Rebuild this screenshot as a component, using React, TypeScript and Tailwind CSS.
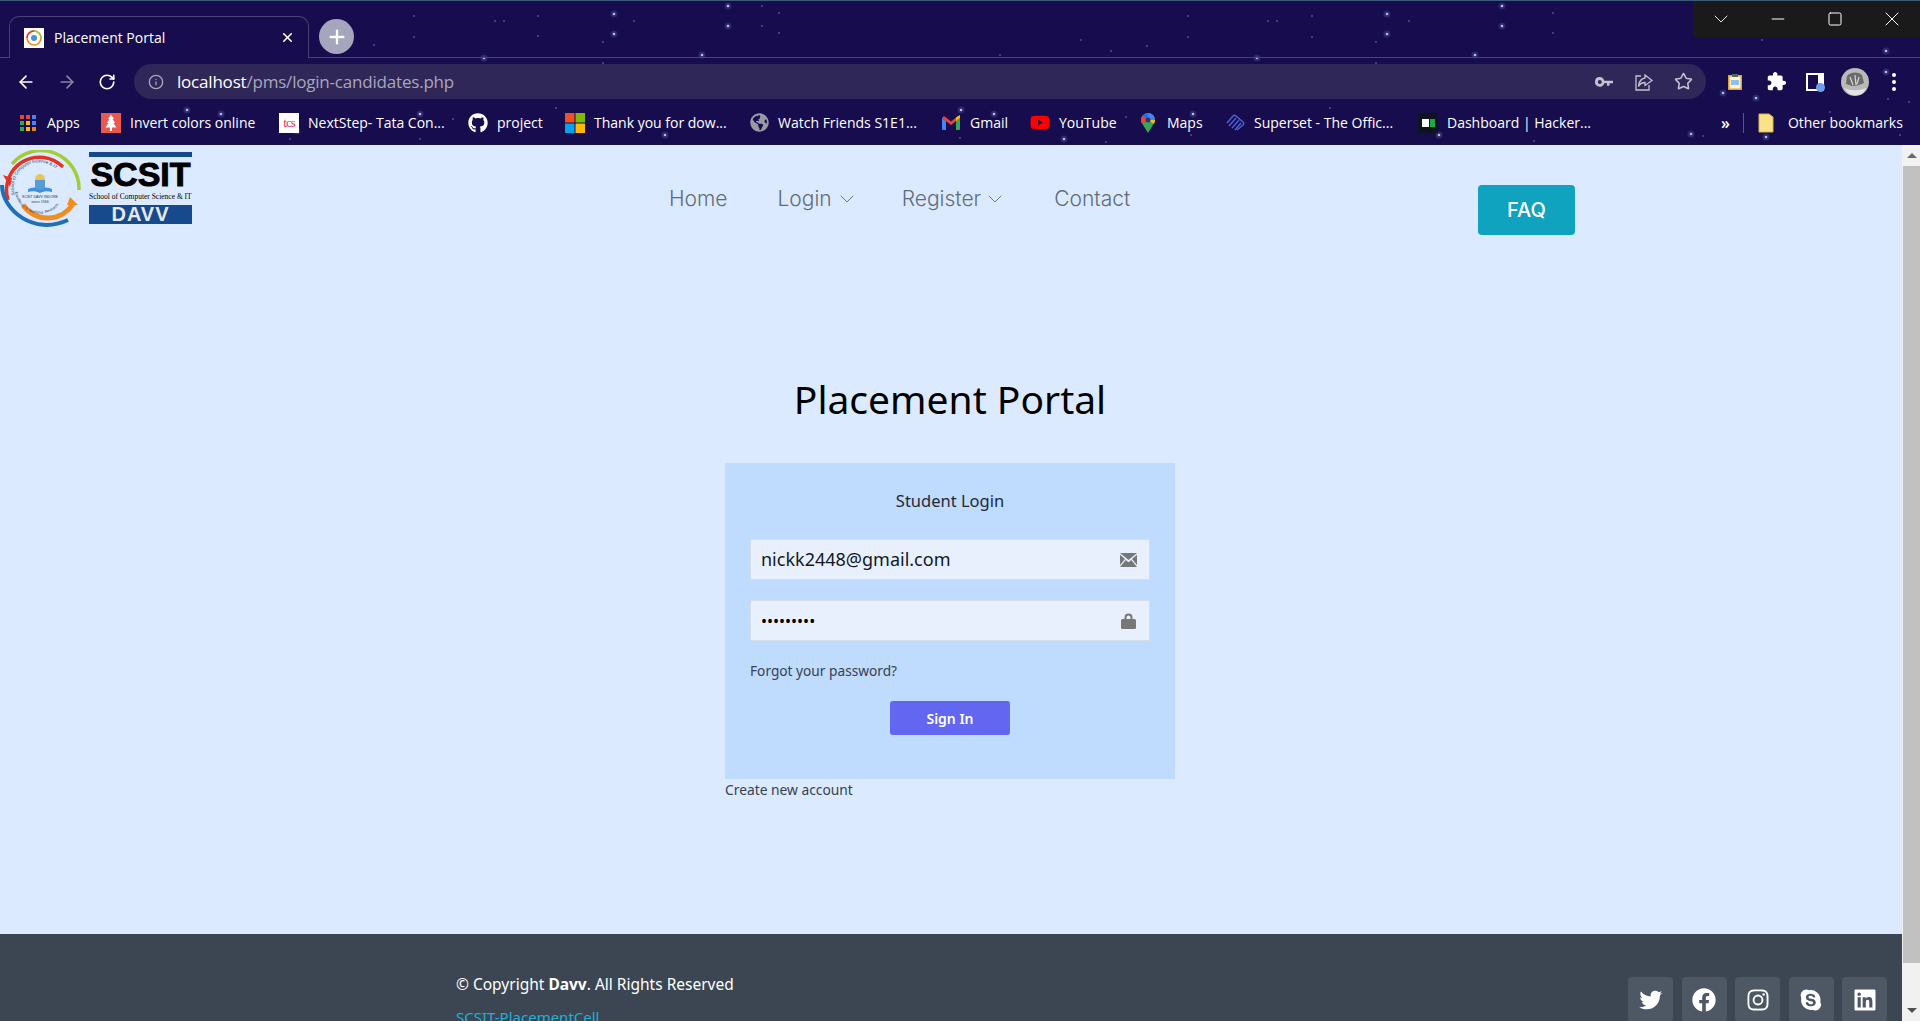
import { ArrowLeft, ArrowRight, ChevronDown, Info, Minus, Plus, RotateCw, Square, Star, X } from "lucide-react";
import { BiLogoFacebookCircle, BiLogoInstagram, BiLogoLinkedinSquare, BiLogoSkype, BiLogoTwitter } from "react-icons/bi";
import { FaGithub, FaGlobeAmericas, FaYoutube } from "react-icons/fa";

const chromeFont = "font-['Open_Sans','Noto_Sans',sans-serif]";
const pageFont = "font-['Noto_Sans',sans-serif]";

// bright stars of the chrome theme
const bigStars = [
  [614, 13], [614, 33], [484, 57], [187, 109], [221, 113], [420, 113], [728, 5], [728, 25], [702, 54], [961, 109], [994, 113], [1064, 138],
  [1193, 113], [1257, 57], [1387, 13], [1387, 33], [1475, 54], [1502, 5], [1502, 25], [1886, 50], [1886, 71], [1723, 92], [1756, 97],
  [1439, 134], [1691, 133], [1766, 136], [297, 130], [665, 134],
];
// faint ones
const smallStars = [
  [603, 41], [603, 62], [420, 138], [556, 107], [290, 138], [453, 118], [762, 5], [779, 12], [762, 25], [779, 32], [960, 137], [1126, 116],
  [1106, 141], [1191, 134], [1081, 39], [1111, 50], [1147, 45], [1188, 15], [1188, 36], [1268, 20], [1277, 20], [1312, 15], [1312, 36],
  [1000, 54], [1376, 41], [1376, 62], [1553, 12], [1553, 32], [1888, 98], [1460, 126], [1703, 135], [1830, 111], [1900, 134], [1762, 39],
  [1909, 101], [1534, 140], [1330, 107], [1409, 20], [495, 20], [504, 20], [538, 15], [538, 35], [414, 15], [414, 36], [634, 20], [374, 44],
];

function Apps() {
  const colors = ["#ea4335", "#ea4335", "#4285f4", "#34a853", "#fbbc04", "#4285f4", "#34a853", "#fbbc04", "#ea8600"];
  return (
    <div className="grid grid-cols-3 gap-[2px] w-[16px] h-[16px]">
      {colors.map((c, i) => (
        <span key={i} className="w-[4px] h-[4px]" style={{ backgroundColor: c }} />
      ))}
    </div>
  );
}

function Invert() {
  return (
    <svg width="20" height="20" viewBox="0 0 20 20">
      <rect width="20" height="20" fill="#e8594f" />
      <path d="M10 1.5 13 6h-1.5l2.5 4h-1.6l3 4.5H11V18H9v-3.500H4.500l3-4.500H6l2.500-4H7z" fill="#fff" />
    </svg>
  );
}

function Tcs() {
  return (
    <div className="w-[20px] h-[20px] bg-white flex items-center justify-center text-[#d6336c] font-['Liberation_Serif',serif] text-[13px] leading-none tracking-[-1px]">
      tcs
    </div>
  );
}

function Microsoft() {
  return (
    <svg width="20" height="20" viewBox="0 0 20 20">
      <rect width="9.500" height="9.500" fill="#f25022" />
      <rect x="10.500" width="9.500" height="9.500" fill="#7fba00" />
      <rect y="10.500" width="9.500" height="9.500" fill="#00a4ef" />
      <rect x="10.500" y="10.500" width="9.500" height="9.500" fill="#ffb900" />
    </svg>
  );
}

function Gmail() {
  return (
    <svg width="18" height="16" viewBox="0 0 18 16">
      <path d="M0 3v11a1 1 0 0 0 1 1h3V6z" fill="#4285f4" />
      <path d="M18 3v11a1 1 0 0 1-1 1h-3V6z" fill="#34a853" />
      <path d="M0 3 9 10l9-7-2-2-7 5.500L2 1z" fill="#ea4335" />
      <path d="M14 2.500 18 0v3l-4 3z" fill="#fbbc04" />
    </svg>
  );
}

function Maps() {
  return (
    <svg width="14" height="20" viewBox="0 0 14 20">
      <path d="M7 0a7 7 0 0 0-7 7c0 1.500.5 2.700 1.300 3.800L7 20l5.700-9.200C13.500 9.700 14 8.500 14 7a7 7 0 0 0-7-7z" fill="#34a853" />
      <path d="M7 0a7 7 0 0 0-5.400 2.500L7 7z" fill="#1a73e8" />
      <path d="M7 0a7 7 0 0 1 7 7H7z" fill="#4285f4" />
      <path d="M1.600 2.500A7 7 0 0 0 1.300 10.800L7 7z" fill="#ea4335" />
      <path d="M14 7c0 1.500-.5 2.700-1.300 3.800L7 7z" fill="#fbbc04" />
      <circle cx="7" cy="7" r="2.500" fill="#3b2c70" />
    </svg>
  );
}

function Superset() {
  return (
    <svg width="20" height="18" viewBox="0 0 20 18" fill="none" stroke="#4a5fd8" strokeWidth="1.500">
      <path d="M2 9 8 2c1-1 2-1 3 0l7 6c1 1 1 2 0 3l-6 5" />
      <path d="M4 12l7-8M7 14l7-8M10 16l6-7" />
    </svg>
  );
}

function Hacker() {
  return (
    <div className="w-[20px] h-[20px] bg-[#0e141e] flex items-center justify-center gap-[1px]">
      <span className="w-[7px] h-[8px] bg-white" />
      <span className="w-[5px] h-[8px] bg-[#1ba94c]" />
    </div>
  );
}

const bookmarks = [
  { w: "w-[83px]", icon: <Apps />, text: "Apps" },
  { w: "w-[178px]", icon: <Invert />, text: "Invert colors online" },
  { w: "w-[189px]", icon: <Tcs />, text: "NextStep- Tata Con..." },
  { w: "w-[97px]", icon: <FaGithub size={20} color="#fff" />, text: "project" },
  { w: "w-[184px]", icon: <Microsoft />, text: "Thank you for dow..." },
  { w: "w-[192px]", icon: <FaGlobeAmericas size={19} color="#9a9aa5" />, text: "Watch Friends S1E1..." },
  { w: "w-[89px]", icon: <Gmail />, text: "Gmail" },
  { w: "w-[108px]", icon: <FaYoutube size={21} color="#ff0000" />, text: "YouTube" },
  { w: "w-[87px]", icon: <Maps />, text: "Maps" },
  { w: "w-[193px]", icon: <Superset />, text: "Superset - The Offic..." },
  { w: "w-[303px]", icon: <Hacker />, text: "Dashboard | Hacker..." },
];

function BrowserChrome() {
  return (
    <div className={`relative h-[145px] shrink-0 bg-[#170d4e] border-t border-[#3d5a7a] overflow-hidden text-white ${chromeFont}`}>
      <svg className="absolute inset-0" width="1920" height="145">
        {bigStars.map(([x, y], i) => (
          <g key={i}>
            <circle cx={x} cy={y} r="3.500" fill="#6f7bc8" opacity="0.25" />
            <circle cx={x} cy={y} r="1.300" fill="#b4bde8" />
          </g>
        ))}
        {smallStars.map(([x, y], i) => (
          <circle key={i} cx={x} cy={y} r="0.700" fill="#8f97c8" />
        ))}
      </svg>

      {/* tab strip */}
      <div className="relative h-[57px] flex items-end border-b border-[#4a4270]">
        <div className="w-[300px] h-[42px] ml-[9px] -mb-px rounded-t-[10px] border border-b-0 border-[#4a4270] bg-[#170d4e] flex items-center pl-[14px] pr-[13px]">
          <svg width="20" height="20" viewBox="0 0 20 20" className="shrink-0 bg-white">
            <circle cx="10" cy="10" r="7" fill="none" stroke="#f08a24" strokeWidth="1.600" />
            <path d="M3 10a7 7 0 0 1 7-7" fill="none" stroke="#e53935" strokeWidth="1.600" />
            <path d="M10 3a7 7 0 0 1 7 7" fill="none" stroke="#9bc53d" strokeWidth="1.600" />
            <circle cx="10" cy="10" r="3" fill="#4a90d9" />
          </svg>
          <span className="ml-[10px] text-[14px] leading-none">Placement Portal</span>
          <X size={15} strokeWidth={2.500} className="ml-auto" />
        </div>
        <div className="ml-[10px] mb-[3px] w-[35px] h-[35px] rounded-full bg-[#a5a5bd] flex items-center justify-center">
          <Plus size={22} strokeWidth={2.500} />
        </div>
        <div className="absolute right-0 top-0 h-[36px] w-[227px] bg-[#1a1a1a] flex">
          <div className="w-[57px] flex items-center justify-center"><ChevronDown size={24} strokeWidth={0.900} /></div>
          <div className="w-[57px] flex items-center justify-center"><Minus size={20} strokeWidth={1.200} /></div>
          <div className="w-[57px] flex items-center justify-center"><Square size={16} strokeWidth={1.500} /></div>
          <div className="w-[57px] flex items-center justify-center"><X size={24} strokeWidth={1} /></div>
        </div>
      </div>

      {/* toolbar */}
      <div className="relative h-[42px] pt-[5px] flex items-center">
        <ArrowLeft size={20} className="ml-[16px]" />
        <ArrowRight size={20} className="ml-[21px] text-[#8a85a5]" />
        <RotateCw size={18} strokeWidth={2.200} className="ml-[21px]" />
        <div className="ml-[18px] w-[1572px] h-[35px] rounded-full bg-[#2f2757] flex items-center pl-[14px] pr-[13px]">
          <Info size={16} className="text-[#aaa6bd]" />
          <span className="ml-[13px] text-[17px] leading-none tracking-[-0.2px]">
            localhost<span className="text-[#aaa6bd]">/pms/login-candidates.php</span>
          </span>
          <svg width="18" height="10" viewBox="0 0 18 10" fill="#c4c1d3" className="ml-auto">
            <path d="M4.800 0a4.800 4.800 0 1 0 4.500 6.300H12v2.500h2.500V6.300H18V3.700H9.300A4.800 4.800 0 0 0 4.800 0zm0 3a2 2 0 1 1 0 4 2 2 0 0 1 0-4z" />
          </svg>
          <svg width="20" height="20" viewBox="0 0 20 20" fill="none" stroke="#c4c1d3" strokeWidth="1.300" className="ml-[21px]">
            <path d="M7 4H2v14h13v-5" />
            <path d="M11 3l7 5.500-7 5v-3c-3 0-5 1-6.500 4C5 9 8 6.500 11 6z" />
          </svg>
          <Star size={19} className="ml-[20px] text-[#c4c1d3]" />
        </div>
        <svg width="14" height="16" viewBox="0 0 14 16" className="ml-[22px]">
          <rect x="0.750" y="1.750" width="12.500" height="13.500" fill="#fdf3d8" stroke="#e0a030" strokeWidth="1.500" />
          <rect x="4" y="0" width="6" height="3" fill="#4b6a60" />
          <rect x="3" y="6" width="8" height="5" fill="#8fc0ea" />
        </svg>
        <svg width="21" height="21" viewBox="0 0 24 24" fill="#fff" className="ml-[24px]">
          <path d="M20.500 11H19V7c0-1.100-.9-2-2-2h-4V3.500C13 2.120 11.880 1 10.500 1S8 2.120 8 3.500V5H4c-1.100 0-1.990.9-1.990 2v3.800H3.500c1.490 0 2.700 1.210 2.700 2.700s-1.210 2.700-2.700 2.700H2V20c0 1.100.9 2 2 2h3.800v-1.500c0-1.490 1.210-2.700 2.700-2.700 1.490 0 2.700 1.210 2.700 2.700V22H17c1.100 0 2-.9 2-2v-4h1.500c1.380 0 2.500-1.120 2.500-2.500S21.880 11 20.500 11z" />
        </svg>
        <div className="relative ml-[19px] w-[18px] h-[18px] bg-white">
          <span className="absolute left-[2px] top-[2px] w-[10px] h-[14px] bg-[#170d4e]" />
          <span className="absolute -right-[1px] -bottom-[1px] w-[9px] h-[9px] rounded-full bg-[#6d9eeb]" />
        </div>
        <svg width="28" height="28" viewBox="0 0 28 28" className="ml-[17px]">
          <circle cx="14" cy="14" r="14" fill="#b9b9b9" />
          <path d="M6 8c3-4 11-5 15-1l2 8c-4 2-8 3-12 3l-6-2z" fill="#6b6b6b" />
          <path d="M9 9l3 8M14 7l1 10M18 9l-2 7" stroke="#d8d8d8" strokeWidth="1.200" />
          <path d="M3 20c6 3 15 3 22 0l-3 5c-5 3-11 3-15 0z" fill="#e4e4e4" />
        </svg>
        <div className="ml-[23px] flex flex-col gap-[3px]">
          <span className="w-[4px] h-[4px] rounded-full bg-white" />
          <span className="w-[4px] h-[4px] rounded-full bg-white" />
          <span className="w-[4px] h-[4px] rounded-full bg-white" />
        </div>
      </div>

      {/* bookmarks */}
      <div className="relative h-[45px] pl-[18px] flex items-center text-[14px]">
        {bookmarks.map((b) => (
          <div key={b.text} className={`${b.w} shrink-0 flex items-center`}>
            <div className="w-[20px] flex justify-center shrink-0">{b.icon}</div>
            <span className="ml-[9px] whitespace-nowrap">{b.text}</span>
          </div>
        ))}
        <span className="text-[16px] font-semibold">»</span>
        <span className="ml-[13px] w-px h-[20px] bg-[#5a5480]" />
        <svg width="16" height="20" viewBox="0 0 16 20" className="ml-[14px]">
          <path d="M1 1h10l4 3v15H1z" fill="#fbe28a" stroke="#d9b44a" />
        </svg>
        <span className="ml-[14px] whitespace-nowrap">Other bookmarks</span>
      </div>
    </div>
  );
}

function Logo() {
  return (
    <div className="flex items-start">
      <svg width="84" height="84" viewBox="0 0 84 84" fill="none" className="mt-[5px] shrink-0">
        <path d="M12 14A38 38 0 0 1 79 40" stroke="#a4cc39" strokeWidth="3.500" />
        <path d="M73 54A30 30 0 0 1 23 55" stroke="#f28c1f" strokeWidth="5" />
        <path d="M8 50A33 33 0 0 1 63 17" stroke="#e53226" strokeWidth="3.500" />
        <path d="M2 35C2 60 34 86 68 70" stroke="#1f6fb8" strokeWidth="4" />
        <path d="M3 25l9 3-2 9z" fill="#e53226" />
        <path d="M78 55 70 47l-3 8z" fill="#f28c1f" />
        <path id="seal-top" d="M15 45A25 25 0 0 1 63 30" />
        <path id="seal-bottom" d="M15 42A25 25 0 0 0 62 50" />
        <text fontSize="4.400" fill="#2b3a55" fontFamily="Liberation Sans">
          <textPath href="#seal-top">School of Computer Science &amp; IT</textPath>
        </text>
        <text fontSize="3.800" fill="#2b3a55" fontFamily="Liberation Sans">
          <textPath href="#seal-bottom">Excellence in Teaching, Research</textPath>
        </text>
        <path d="M28 39c4-2 8-2 12 0 4-2 8-2 12 0v3c-4-1-8-1-12 1-4-2-8-2-12-1z" fill="#3f8fd9" />
        <circle cx="40" cy="29" r="5" fill="#e6c65a" />
        <path d="M35 30h10v8l-5 2-5-2z" fill="#5a9ad8" />
        <text x="40" y="48" textAnchor="middle" fontSize="3.600" fill="#333" fontFamily="Liberation Sans">SCSIT DAVV INDORE</text>
        <text x="40" y="53" textAnchor="middle" fontSize="3.600" fill="#333" fontFamily="Liberation Sans">since 1966</text>
      </svg>
      <div className="ml-[5px] mt-[7px] w-[103px] flex flex-col">
        <div className="h-[5px] bg-[#164a8c]" />
        <div className="h-[33px] font-['Liberation_Sans',sans-serif] font-bold text-[34px] leading-[35px] text-black text-center [-webkit-text-stroke:1px_black] whitespace-nowrap">SCSIT</div>
        <div className="h-[13px] font-['Liberation_Serif',serif] text-[7.500px] leading-[13px] text-black whitespace-nowrap">School of Computer Science &amp; IT</div>
        <div className="mt-[2px] h-[19px] bg-[#164a8c] font-['Liberation_Sans',sans-serif] font-bold text-[20px] leading-[19px] tracking-[1px] text-[#e8e8e8] text-center">DAVV</div>
      </div>
    </div>
  );
}

function Header() {
  return (
    <header className="h-[90px] shrink-0 flex items-start">
      <div className="w-[669px] shrink-0"><Logo /></div>
      <nav className="pt-[41px] flex items-center text-[21px] leading-[26px] font-light text-[#5f6d7b] font-['Inter',sans-serif]">
        <a>Home</a>
        <a className="ml-[50px] flex items-center">Login<ChevronDown size={24} strokeWidth={0.900} className="ml-[3px]" /></a>
        <a className="ml-[43px] flex items-center">Register<ChevronDown size={24} strokeWidth={0.900} className="ml-[2px]" /></a>
        <a className="ml-[47px]">Contact</a>
      </nav>
      <button className="ml-auto mr-[327px] mt-[40px] w-[97px] h-[50px] rounded-[4px] bg-[#0fa3bf] text-white text-[20px] font-medium font-['Inter',sans-serif]">FAQ</button>
    </header>
  );
}

function LoginCard() {
  return (
    <div className="w-[450px] h-[316px] bg-[#bfdbfe] px-[25px] pt-[26px] flex flex-col">
      <p className="text-center text-[16.500px] leading-[24px] text-[#1f2937]">Student Login</p>
      <div className="mt-[26px] h-[41px] bg-[#e8f0fe] border border-[#d5dde6] flex items-center pl-[10px] pr-[12px]">
        <input readOnly value="nickk2448@gmail.com" className="flex-1 bg-transparent outline-none text-[18px] text-[#111827]" />
        <svg width="17" height="14" viewBox="0 0 17 14" fill="#777">
          <path d="M0 0h17L8.500 7z" />
          <path d="M0 1.700V12l5-6zM17 1.700V12l-5-6zM0 14h17l-5.700-7-2.800 2.300L5.700 7z" />
        </svg>
      </div>
      <div className="mt-[20px] h-[41px] bg-[#e8f0fe] border border-[#d5dde6] flex items-center pl-[10px] pr-[13px]">
        <input readOnly type="password" value="123456789" className="flex-1 bg-transparent outline-none text-[16px] text-black" />
        <svg width="15" height="16" viewBox="0 0 15 16" fill="#777">
          <path d="M3.500 7V4.500a4 4 0 0 1 8 0V7h-2V4.500a2 2 0 0 0-4 0V7z" />
          <rect y="6" width="15" height="10" rx="1.500" />
        </svg>
      </div>
      <a className="mt-[20px] text-[13.700px] leading-[20px] text-[#374151]">Forgot your password?</a>
      <button className="mt-[20px] self-center w-[120px] h-[34px] rounded-[3px] bg-[#6366f1] text-white text-[14px] font-semibold">Sign In</button>
    </div>
  );
}

function Footer() {
  const icons = [BiLogoTwitter, BiLogoFacebookCircle, BiLogoInstagram, BiLogoSkype, BiLogoLinkedinSquare];
  return (
    <footer className="h-[87px] shrink-0 bg-[#3b4652] overflow-hidden flex pl-[456px] pr-[15px]">
      <div className="pt-[38px] text-[15.500px] leading-[24px] text-white">
        <p>© Copyright <b>Davv</b>. All Rights Reserved</p>
        <p className="mt-[9px] text-[15px] text-[#1fb0d6]">SCSIT-PlacementCell</p>
      </div>
      <div className="ml-auto pt-[43px] flex gap-[8.500px]">
        {icons.map((Icon, i) => (
          <a key={i} className="w-[45px] h-[45px] rounded-[4px] bg-[#4d5864] flex items-center justify-center text-white">
            <Icon size={28} />
          </a>
        ))}
      </div>
    </footer>
  );
}

function Scrollbar() {
  return (
    <div className="w-[18px] shrink-0 bg-[#f1f1f1] flex flex-col pl-px">
      <div className="h-[21px] flex items-center justify-center">
        <span className="w-0 h-0 border-x-[5px] border-x-transparent border-b-[5px] border-b-[#6a6a6a]" />
      </div>
      <div className="w-full h-[797px] bg-[#c1c1c1]" />
      <div className="mt-auto h-[22px] flex items-center justify-center">
        <span className="w-0 h-0 border-x-[5px] border-x-transparent border-t-[5px] border-t-[#505050]" />
      </div>
    </div>
  );
}

export default function App() {
  return (
    <div className="w-[1920px] h-[1021px] overflow-hidden flex flex-col bg-[#dbeafe]">
      <BrowserChrome />
      <div className={`flex-1 min-h-0 flex ${pageFont}`}>
        <div className="w-[1902px] flex flex-col">
          <Header />
          <main className="flex-1 flex flex-col items-center pr-[2px] pt-[134px]">
            <h1 className="text-[39px] leading-[60px] text-black">Placement Portal</h1>
            <div className="mt-[34px]">
              <LoginCard />
              <p className="mt-[1px] text-[13.800px] leading-[20px] text-[#374151]">Create new account</p>
            </div>
          </main>
          <Footer />
        </div>
        <Scrollbar />
      </div>
    </div>
  );
}
